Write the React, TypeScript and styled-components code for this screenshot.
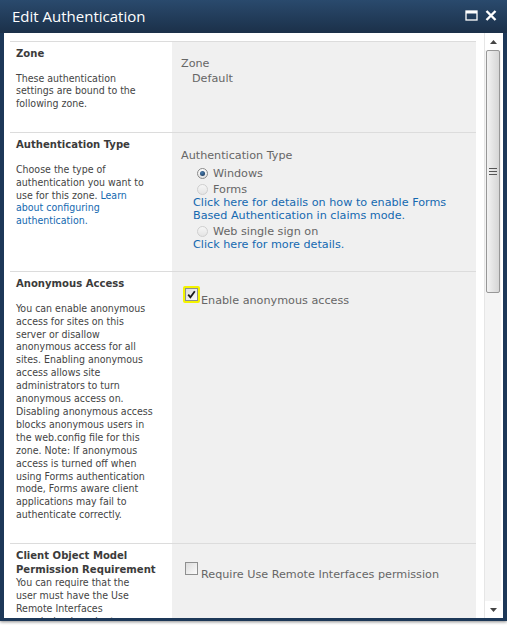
import React from 'react';
import styled, {createGlobalStyle} from 'styled-components';

const GlobalStyle = createGlobalStyle`
  html, body { margin: 0; padding: 0; background: #fff; }
  #root { width: 507px; height: 625px; }
`;

const LEFT_FONT = `"DejaVu Sans Condensed", "Liberation Sans", sans-serif`;
const RIGHT_FONT = `"DejaVu Sans", Verdana, sans-serif`;

const Dialog = styled.div`
  width: 507px;
  height: 621px;
  box-sizing: border-box;
  display: flex;
  flex-direction: column;
  background: #1d3858;
  box-shadow: 0 1px 3px rgba(0, 0, 0, 0.45);
`;

const TitleBar = styled.div`
  height: 33px;
  flex: none;
  display: flex;
  align-items: center;
  padding: 0 8px 2px 12px;
  box-sizing: border-box;
  background: linear-gradient(#2a4a6d, #1b3049);
`;

const Title = styled.h1`
  flex: 1;
  margin: 0;
  font: 400 15px "Open Sans", "Noto Sans", sans-serif;
  color: #fff;
`;

const WinButton = styled.span`
  display: flex;
  width: 16px;
  height: 14px;
  margin-left: 4px;
  align-items: center;
  justify-content: center;
`;

const Body = styled.div`
  flex: 1;
  display: flex;
  margin: 0 4px 3px 4px;
  background: #fff;
  overflow: hidden;
`;

const Content = styled.div`
  flex: 1;
  padding: 8px 8px 0 6px;
  overflow: hidden;
`;

const Section = styled.div`
  display: grid;
  grid-template-columns: 162px 1fr;
  border-top: 1px solid #dcdcdc;
`;

const Info = styled.div`
  padding: 5px 6px 22px 6px;
`;

const Heading = styled.h3<{ tight?: boolean }>`
  margin: 0 0 ${p => (p.tight ? '0' : '11px')};
  font: 700 11.2px/13.5px ${LEFT_FONT};
  color: #3b3b3b;
`;

const Desc = styled.div`
  font: 400 10.5px/12.9px ${LEFT_FONT};
  color: #444;
`;

const Line = styled.span`
  display: block;
  white-space: nowrap;
`;

const Link = styled.a`
  color: #1469b0;
  text-decoration: none;
`;

const Field = styled.div<{ top: number }>`
  background: #f0f0f0;
  padding: ${p => p.top}px 9px 19px 9px;
  font: 400 11.2px/13px ${RIGHT_FONT};
  color: #666;
`;

const Label = styled.div`
  line-height: 15px;
`;

const Value = styled.div`
  padding-left: 11px;
  line-height: 15px;
`;

const Options = styled.div`
  margin-top: 2px;
  padding-left: 16px;
`;

const Option = styled.div`
  display: flex;
  align-items: center;
  height: 16px;
  gap: 5px;
`;

const LinkText = styled.div`
  margin-left: -4px;
  margin-top: -1px;
  margin-bottom: 1px;
`;

const Radio = styled.span<{ checked?: boolean; disabled?: boolean }>`
  width: 11px;
  height: 11px;
  border-radius: 50%;
  box-sizing: border-box;
  border: 1px solid ${p => (p.disabled ? '#cfcfcf' : '#8a8a8a')};
  background: ${p => (p.disabled ? 'linear-gradient(#f6f6f6, #e4e4e4)' : 'linear-gradient(#fdfdfd, #e2e2e2)')};
  display: flex;
  align-items: center;
  justify-content: center;
  &::after {
    content: '';
    display: ${p => (p.checked ? 'block' : 'none')};
    width: 5px;
    height: 5px;
    border-radius: 50%;
    background: radial-gradient(circle at 40% 35%, #4a7db0, #14304f);
  }
`;

const CheckRow = styled.div`
  display: flex;
  align-items: flex-end;
  gap: 3px;
  padding-left: 4px;
`;

const Highlight = styled.span<{ on?: boolean }>`
  display: flex;
  align-items: center;
  justify-content: center;
  width: 17px;
  height: 17px;
  margin: -2px -2px 0 -2px;
  border-radius: 2px;
  background: ${p => (p.on ? '#f4f400' : 'transparent')};
`;

const Box = styled.span`
  width: 13px;
  height: 13px;
  box-sizing: border-box;
  border: 1px solid #8e8f8f;
  background: linear-gradient(135deg, #dcdcdc, #fbfbfb);
  display: flex;
  align-items: center;
  justify-content: center;
`;

const CheckLabel = styled.span`
  position: relative;
  top: 4px;
  line-height: 13px;
`;

const Scrollbar = styled.div`
  width: 16px;
  flex: none;
  margin-right: 2px;
  display: flex;
  flex-direction: column;
  background: #f4f4f4;
  border-left: 1px solid #e6e6e6;
`;

const ScrollButton = styled.div`
  height: 17px;
  display: flex;
  align-items: center;
  justify-content: center;
  background: #fff;
`;

const Track = styled.div`
  flex: 1;
  padding: 0 1px;
`;

const Thumb = styled.div`
  height: 243px;
  box-sizing: border-box;
  border: 1px solid #979797;
  border-radius: 2px;
  background: linear-gradient(90deg, #f3f3f3, #e2e2e2 55%, #d6d6d6);
  display: flex;
  align-items: center;
  justify-content: center;
`;

const anonymousLines = [
  'You can enable anonymous',
  'access for sites on this',
  'server or disallow',
  'anonymous access for all',
  'sites. Enabling anonymous',
  'access allows site',
  'administrators to turn',
  'anonymous access on.',
  'Disabling anonymous access',
  'blocks anonymous users in',
  'the web.config file for this',
  'zone. Note: If anonymous',
  'access is turned off when',
  'using Forms authentication',
  'mode, Forms aware client',
  'applications may fail to',
  'authenticate correctly.',
];

const clientLines = [
  'You can require that the',
  'user must have the Use',
  'Remote Interfaces',
  'permission in order to use',
];

const Lines = ({lines}: { lines: string[] }) => (
  <Desc>{lines.map(l => <Line key={l}>{l}</Line>)}</Desc>
);

const Check = ({checked, highlight}: { checked?: boolean; highlight?: boolean }) => (
  <Highlight on={highlight}>
    <Box>
      {checked && (
        <svg width="9" height="9" viewBox="0 0 9 9">
          <path d="M1.2 4.6 L3.4 7.2 L7.8 1.2" fill="none" stroke="#1c1c1c" strokeWidth="1.8"/>
        </svg>
      )}
    </Box>
  </Highlight>
);

export default function App() {
  return (
    <>
      <GlobalStyle/>
      <Dialog>
        <TitleBar>
          <Title>Edit Authentication</Title>
          <WinButton>
            <svg width="13" height="11" viewBox="0 0 13 11">
              <rect x="1" y="1" width="11" height="9" fill="none" stroke="#fff" strokeWidth="1.3"/>
              <rect x="1" y="1" width="11" height="2.5" fill="#fff"/>
            </svg>
          </WinButton>
          <WinButton>
            <svg width="12" height="11" viewBox="0 0 12 11">
              <path d="M1.5 1 L10.5 10 M10.5 1 L1.5 10" stroke="#fff" strokeWidth="2.4"/>
            </svg>
          </WinButton>
        </TitleBar>
        <Body>
          <Content>
            <Section>
              <Info>
                <Heading>Zone</Heading>
                <Lines lines={['These authentication', 'settings are bound to the', 'following zone.']}/>
              </Info>
              <Field top={14}>
                <Label>Zone</Label>
                <Value>Default</Value>
              </Field>
            </Section>
            <Section>
              <Info>
                <Heading>Authentication Type</Heading>
                <Desc>
                  <Line>Choose the type of</Line>
                  <Line>authentication you want to</Line>
                  <Line>use for this zone. <Link href="#">Learn</Link></Line>
                  <Line><Link href="#">about configuring</Link></Line>
                  <Line><Link href="#">authentication.</Link></Line>
                </Desc>
              </Info>
              <Field top={15}>
                <Label>Authentication Type</Label>
                <Options>
                  <Option><Radio checked/>Windows</Option>
                  <Option><Radio disabled/>Forms</Option>
                  <LinkText>
                    <Line><Link href="#">Click here for details on how to enable Forms</Link></Line>
                    <Line><Link href="#">Based Authentication in claims mode.</Link></Line>
                  </LinkText>
                  <Option><Radio disabled/>Web single sign on</Option>
                  <LinkText>
                    <Line><Link href="#">Click here for more details.</Link></Line>
                  </LinkText>
                </Options>
              </Field>
            </Section>
            <Section>
              <Info>
                <Heading>Anonymous Access</Heading>
                <Lines lines={anonymousLines}/>
              </Info>
              <Field top={16}>
                <CheckRow>
                  <Check checked highlight/>
                  <CheckLabel>Enable anonymous access</CheckLabel>
                </CheckRow>
              </Field>
            </Section>
            <Section>
              <Info>
                <Heading tight>Client Object Model<br/>Permission Requirement</Heading>
                <Lines lines={clientLines}/>
              </Info>
              <Field top={18}>
                <CheckRow>
                  <Check/>
                  <CheckLabel>Require Use Remote Interfaces permission</CheckLabel>
                </CheckRow>
              </Field>
            </Section>
          </Content>
          <Scrollbar>
            <ScrollButton>
              <svg width="7" height="4" viewBox="0 0 7 4"><path d="M0 4 L3.5 0 L7 4 Z" fill="#444"/></svg>
            </ScrollButton>
            <Track>
              <Thumb>
                <svg width="8" height="7" viewBox="0 0 8 7">
                  <path d="M0 0.5 H8 M0 3.5 H8 M0 6.5 H8" stroke="#555" strokeWidth="1"/>
                </svg>
              </Thumb>
            </Track>
            <ScrollButton>
              <svg width="7" height="4" viewBox="0 0 7 4"><path d="M0 0 L7 0 L3.5 4 Z" fill="#444"/></svg>
            </ScrollButton>
          </Scrollbar>
        </Body>
      </Dialog>
    </>
  );
}
